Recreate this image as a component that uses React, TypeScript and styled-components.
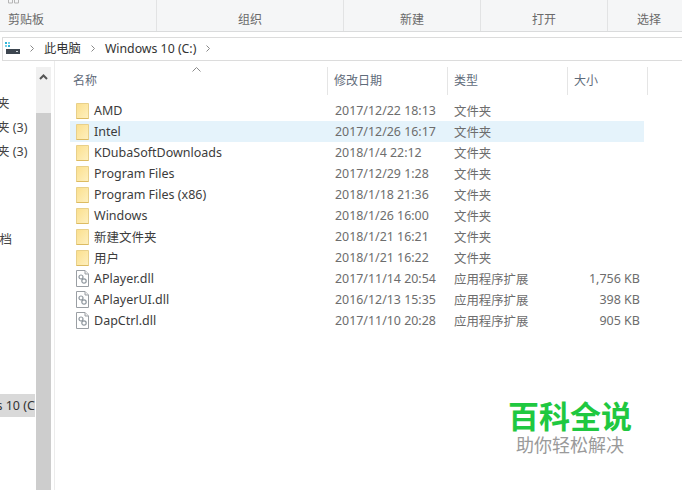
import React from "react";
import styled, { createGlobalStyle } from "styled-components";

const Global = createGlobalStyle`
  html, body { margin: 0; padding: 0; background: #fff; overflow: hidden; }
  #root { width: 682px; height: 490px; }
`;

const Window = styled.div`
  position: relative;
  width: 682px;
  height: 490px;
  overflow: hidden;
  background: #fff;
  font-family: "Noto Sans", "Noto Sans CJK SC", sans-serif;
  font-size: 12.5px;
  color: #444;
  display: flex;
  flex-direction: column;
`;

const Ribbon = styled.div`
  height: 31px;
  flex: none;
  display: grid;
  grid-template-columns: 157px 187px 137px 127px 74px;
  background: #f5f6f7;
  border-bottom: 1px solid #dadbdc;
`;

const RibbonGroup = styled.div<{ $last?: boolean; $left?: boolean }>`
  display: flex;
  align-items: flex-end;
  justify-content: ${(p) => (p.$left ? "flex-start" : "center")};
  padding: 0 0 3px ${(p) => (p.$left ? "8px" : p.$last ? "8px" : "0")};
  color: #6a6a6a;
  font-size: 12px;
  line-height: 16px;
  border-right: ${(p) => (p.$last ? "none" : "1px solid #e2e3e4")};
`;

const TopFragment = styled.svg`
  position: absolute;
  left: 8px;
  top: 0;
`;

const AddressBar = styled.div`
  flex: none;
  height: 22px;
  margin: 5px 0 0 2px;
  border: 1px solid #dcdcdc;
  border-right: none;
  display: flex;
  align-items: center;
  padding: 0 0 2px 2px;
  box-sizing: content-box;
  height: 20px;
  color: #333;
  font-size: 12.3px;
`;

const Crumb = styled.span`
  white-space: nowrap;
`;

const Chevron = styled.svg`
  flex: none;
  margin: 0 10px;
`;

const Body = styled.div`
  flex: 1;
  display: flex;
  min-height: 0;
`;

const Sidebar = styled.div`
  width: 36px;
  flex: none;
  overflow: hidden;
  padding-top: 30px;
  color: #444;
`;

const NavRow = styled.div<{ $gap: number; $selected?: boolean }>`
  height: 23px;
  margin-top: ${(p) => p.$gap}px;
  display: flex;
  align-items: center;
  white-space: nowrap;
  overflow: hidden;
  width: 35px;
  background: ${(p) => (p.$selected ? "#d9d9d9" : "transparent")};
  color: ${(p) => (p.$selected ? "#333" : "#444")};
`;

const NavText = styled.span<{ $shift: number }>`
  margin-left: ${(p) => p.$shift}px;
  flex: none;
`;

const Scrollbar = styled.div`
  width: 15px;
  flex: none;
  margin-top: 6px;
  display: flex;
  flex-direction: column;
  background: #f0f0f0;
  border-right: 3px solid #fff;
  box-sizing: content-box;
`;

const ScrollUp = styled.div`
  height: 46px;
  display: flex;
  justify-content: center;
  padding-top: 7px;
  box-sizing: border-box;
`;

const ScrollThumb = styled.div`
  flex: 1;
  background: #cdcdcd;
`;

const Divider = styled.div`
  width: 1px;
  flex: none;
  background: #ececec;
`;

const Main = styled.div`
  position: relative;
  flex: 1;
  padding: 6px 0 0 15px;
  min-width: 0;
`;

const SortMark = styled.svg`
  position: absolute;
  left: 137px;
  top: 6px;
`;

const Header = styled.div`
  display: grid;
  grid-template-columns: 258px 120px 120px 80px;
  height: 28px;
  width: 578px;
  color: #5f6b7a;
  font-size: 12px;
`;

const HeaderCell = styled.div<{ $inset: number }>`
  display: flex;
  align-items: center;
  padding: 0 0 2px ${(p) => p.$inset}px;
  border-right: 1px solid #e5e5e5;
`;

const FileList = styled.div`
  margin-top: 5px;
  width: 574px;
`;

const FileRow = styled.div<{ $active?: boolean }>`
  display: grid;
  grid-template-columns: 258px 120px 120px 76px;
  height: 21px;
  align-items: center;
  background: ${(p) => (p.$active ? "#e5f3fb" : "transparent")};
`;

const NameCell = styled.div`
  display: flex;
  align-items: center;
  gap: 5px;
  padding-left: 6px;
  color: #3c3c3c;
  white-space: nowrap;
`;

const InfoCell = styled.div<{ $inset: number }>`
  padding-left: ${(p) => p.$inset}px;
  color: #6d6d6d;
  white-space: nowrap;
  font-size: 12.4px;
`;

const SizeCell = styled.div`
  padding-right: 4px;
  text-align: right;
  color: #6d6d6d;
  white-space: nowrap;
`;

const Watermark = styled.div`
  position: absolute;
  left: 496px;
  top: 394px;
  width: 164px;
  height: 72px;
  background: rgba(255, 255, 255, 0.9);
  display: flex;
  flex-direction: column;
  align-items: flex-start;
`;

const BrandTitle = styled.div`
  margin: 3px 0 0 12px;
  font-family: "Noto Sans CJK SC", sans-serif;
  font-size: 31px;
  line-height: 36px;
  font-weight: 700;
  color: #1fc840;
  white-space: nowrap;
`;

const BrandTagline = styled.div`
  margin: 0 0 0 20px;
  font-family: "Noto Sans CJK SC", sans-serif;
  font-size: 18px;
  line-height: 22px;
  color: #9a9a9a;
  white-space: nowrap;
`;

const FolderIcon = () => (
  <svg width="13" height="16" viewBox="0 0 13 16">
    <defs>
      <linearGradient id="folderFill" x1="0" y1="0" x2="1" y2="1">
        <stop offset="0" stopColor="#fbdf8c" />
        <stop offset="1" stopColor="#fef0c0" />
      </linearGradient>
    </defs>
    <path d="M0.5 0.5H12.5V15.5H0.5Z" fill="url(#folderFill)" stroke="#e8d08a" />
    <path d="M0.5 15.5H12.5" stroke="#dcbb62" />
  </svg>
);

const FileIcon = () => (
  <svg width="13" height="17" viewBox="0 0 13 17">
    <path d="M0.5 0.5H9L12.5 4V16.5H0.5Z" fill="#fff" stroke="#9a9fa4" />
    <path d="M9 0.5V4H12.5" fill="#eee" stroke="#9a9fa4" />
    <circle cx="5" cy="7" r="2" fill="none" stroke="#8f979e" strokeWidth="1.2" />
    <circle cx="8" cy="11" r="2.2" fill="none" stroke="#8f979e" strokeWidth="1.2" />
  </svg>
);

const Chev = () => (
  <Chevron width="4" height="7" viewBox="0 0 4 7">
    <path d="M0.5 0.5L3.5 3.5L0.5 6.5" fill="none" stroke="#888" />
  </Chevron>
);

const ComputerIcon = () => (
  <svg width="15" height="12" viewBox="0 0 15 12">
    <rect x="0" y="0" width="2" height="2" fill="#2fb4d8" />
    <rect x="3" y="0" width="2" height="2" fill="#6fd0e8" />
    <rect x="0" y="3" width="2" height="2" fill="#6fd0e8" />
    <rect x="3" y="3" width="2" height="2" fill="#2fb4d8" />
    <rect x="1" y="7" width="14" height="5" fill="#3d4650" />
    <rect x="11" y="9" width="2" height="1" fill="#cfd6da" />
  </svg>
);

const ribbon = ["剪贴板", "组织", "新建", "打开", "选择"];

const nav = [
  { text: "文件夹", gap: 0, shift: -28 },
  { text: "文件夹 (3)", gap: 1, shift: -28 },
  { text: "文件夹 (3)", gap: 1, shift: -28 },
  { text: "文档", gap: 65, shift: -13 },
];

type Item = { name: string; date: string; type: string; size?: string; file?: boolean; active?: boolean };

const items: Item[] = [
  { name: "AMD", date: "2017/12/22 18:13", type: "文件夹" },
  { name: "Intel", date: "2017/12/26 16:17", type: "文件夹", active: true },
  { name: "KDubaSoftDownloads", date: "2018/1/4 22:12", type: "文件夹" },
  { name: "Program Files", date: "2017/12/29 1:28", type: "文件夹" },
  { name: "Program Files (x86)", date: "2018/1/18 21:36", type: "文件夹" },
  { name: "Windows", date: "2018/1/26 16:00", type: "文件夹" },
  { name: "新建文件夹", date: "2018/1/21 16:21", type: "文件夹" },
  { name: "用户", date: "2018/1/21 16:22", type: "文件夹" },
  { name: "APlayer.dll", date: "2017/11/14 20:54", type: "应用程序扩展", size: "1,756 KB", file: true },
  { name: "APlayerUI.dll", date: "2016/12/13 15:35", type: "应用程序扩展", size: "398 KB", file: true },
  { name: "DapCtrl.dll", date: "2017/11/10 20:28", type: "应用程序扩展", size: "905 KB", file: true },
];

export default function App() {
  return (
    <Window>
      <Global />
      <Ribbon>
        {ribbon.map((r, i) => (
          <RibbonGroup key={r} $left={i === 0} $last={i === ribbon.length - 1}>
            {r}
          </RibbonGroup>
        ))}
      </Ribbon>
      <TopFragment width="11" height="4" viewBox="0 0 11 4">
        <path d="M0.5 0V3H4.5V0M6.5 0V3H10.5V0" fill="none" stroke="#b5b5b5" />
      </TopFragment>
      <AddressBar>
        <ComputerIcon />
        <Chev />
        <Crumb>此电脑</Crumb>
        <Chev />
        <Crumb>Windows 10 (C:)</Crumb>
        <Chev />
      </AddressBar>
      <Body>
        <Sidebar>
          {nav.map((n, i) => (
            <NavRow key={i} $gap={n.gap}>
              <NavText $shift={n.shift}>{n.text}</NavText>
            </NavRow>
          ))}
          <NavRow $gap={144} $selected>
            <NavText $shift={-51}>Windows 10 (C:)</NavText>
          </NavRow>
        </Sidebar>
        <Scrollbar>
          <ScrollUp>
            <svg width="9" height="6" viewBox="0 0 9 6">
              <path d="M1 5L4.5 1.5L8 5" fill="none" stroke="#555" strokeWidth="2" />
            </svg>
          </ScrollUp>
          <ScrollThumb />
        </Scrollbar>
        <Divider />
        <Main>
          <SortMark width="9" height="5" viewBox="0 0 9 5">
            <path d="M0.5 4.5L4.5 0.5L8.5 4.5" fill="none" stroke="#8a8a8a" />
          </SortMark>
          <Header>
            <HeaderCell $inset={3}>名称</HeaderCell>
            <HeaderCell $inset={6}>修改日期</HeaderCell>
            <HeaderCell $inset={6}>类型</HeaderCell>
            <HeaderCell $inset={6}>大小</HeaderCell>
          </Header>
          <FileList>
            {items.map((it) => (
              <FileRow key={it.name} $active={it.active}>
                <NameCell>
                  {it.file ? <FileIcon /> : <FolderIcon />}
                  {it.name}
                </NameCell>
                <InfoCell $inset={7}>{it.date}</InfoCell>
                <InfoCell $inset={6}>{it.type}</InfoCell>
                <SizeCell>{it.size}</SizeCell>
              </FileRow>
            ))}
          </FileList>
        </Main>
      </Body>
      <Watermark>
        <BrandTitle>百科全说</BrandTitle>
        <BrandTagline>助你轻松解决</BrandTagline>
      </Watermark>
    </Window>
  );
}
